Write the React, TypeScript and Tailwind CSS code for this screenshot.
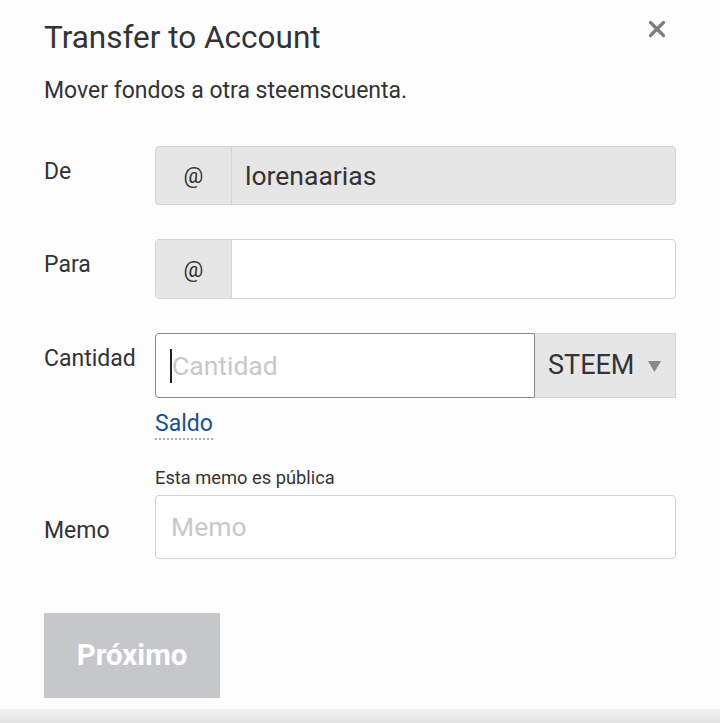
import { X } from 'lucide-react'

export default function App() {
  return (
    <div
      className="flex min-h-[723px] w-[720px] flex-col bg-[#fdfdfd] text-[#333]"
      style={{ fontFamily: 'Roboto, "Liberation Sans", sans-serif' }}
    >
      <div className="relative flex-1 px-[44px] pt-[17px]">
        <button
          type="button"
          aria-label="Cerrar"
          className="absolute right-[50px] top-[16px] text-[#7d7d7d]"
        >
          <X className="h-[26px] w-[26px]" strokeWidth={3} />
        </button>

        <h2 className="text-[31.5px] leading-[42px] text-[#333]">Transfer to Account</h2>
        <p className="mt-[17px] text-[23px] leading-[30px] text-[#333]">
          Mover fondos a otra steemscuenta.
        </p>

        {/* De */}
        <div className="mt-[40px] flex items-start">
          <label className="w-[111px] pt-[10px] text-[23px] leading-[32px]">De</label>
          <div className="flex h-[59px] flex-1 overflow-hidden rounded-[4px] border border-[#d4d4d4] bg-[#e6e6e6]">
            <span className="flex w-[76px] items-center justify-center border-r border-[#d4d4d4] text-[22px]">
              @
            </span>
            <input
              disabled
              value="lorenaarias"
              readOnly
              className="min-w-0 flex-1 bg-transparent px-[13px] text-[26.5px] text-[#333] outline-none"
            />
          </div>
        </div>

        {/* Para */}
        <div className="mt-[34px] flex items-start">
          <label className="w-[111px] pt-[10px] text-[23px] leading-[32px]">Para</label>
          <div className="flex h-[60px] flex-1 overflow-hidden rounded-[4px] border border-[#d4d4d4] bg-white">
            <span className="flex w-[76px] items-center justify-center border-r border-[#d4d4d4] bg-[#e6e6e6] text-[22px]">
              @
            </span>
            <input className="min-w-0 flex-1 bg-transparent px-[14px] text-[26px] outline-none" />
          </div>
        </div>

        {/* Cantidad */}
        <div className="mt-[34px] flex items-start">
          <label className="w-[111px] pt-[10px] text-[23px] leading-[32px]">Cantidad</label>
          <div className="flex h-[65px] flex-1">
            <div className="flex flex-1 items-center rounded-l-[4px] border border-[#8a8a8a] bg-white pl-[14px]">
              <span className="h-[34px] w-[2px] bg-[#222]" />
              <span className="text-[26.5px] text-[#c8c8c8]">Cantidad</span>
            </div>
            <div className="flex w-[141px] items-center justify-between border-y border-r border-[#d4d4d4] bg-[#e6e6e6] pl-[13px] pr-[14px]">
              <span className="text-[27px] text-[#333]">STEEM</span>
              <svg width="13" height="11" viewBox="0 0 12 10" className="mt-[1px]">
                <path d="M0 0 H12 L6 10 Z" fill="#888" />
              </svg>
            </div>
          </div>
        </div>

        <div className="ml-[111px] mt-[13px]">
          <a className="border-b-2 border-dotted border-[#aab] pb-[1px] text-[23px] leading-[26px] text-[#1a4f8f]">
            Saldo
          </a>
        </div>

        {/* Memo */}
        <div className="ml-[111px] mt-[29px] text-[18.3px] leading-[22px] text-[#333]">
          Esta memo es pública
        </div>
        <div className="mt-[6px] flex items-center">
          <label className="w-[111px] pt-[8px] text-[23px] leading-[30px]">Memo</label>
          <div className="flex h-[64px] flex-1 items-center rounded-[4px] border border-[#d4d4d4] bg-white px-[15px]">
            <span className="text-[26.5px] text-[#c8c8c8]">Memo</span>
          </div>
        </div>

        <button
          type="button"
          disabled
          className="mt-[54px] flex h-[85px] w-[176px] items-center justify-center bg-[#c6c7c9] text-[29.5px] font-bold text-white"
        >
          Próximo
        </button>
      </div>
      <div className="h-[14px] bg-gradient-to-b from-[#f2f2f2] to-[#e2e2e2]" />
    </div>
  )
}
